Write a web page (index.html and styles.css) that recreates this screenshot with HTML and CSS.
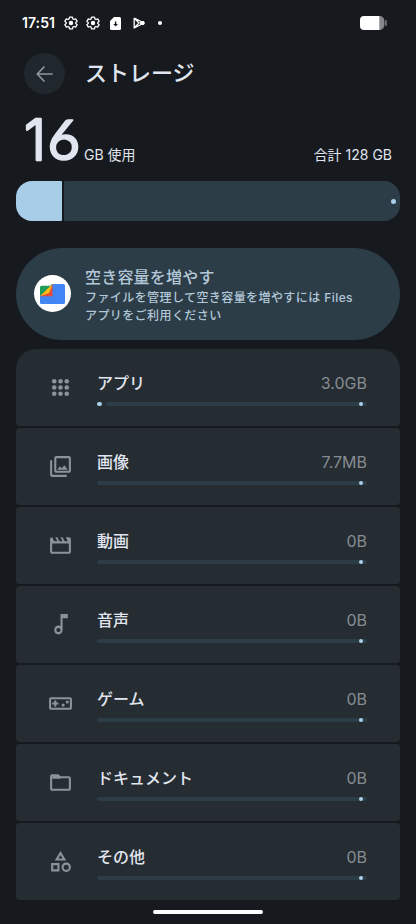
FILE: index.html
```
<!DOCTYPE html>
<html lang="ja">
<head>
<meta charset="utf-8">
<meta name="viewport" content="width=device-width">
<title>ストレージ</title>
<link rel="stylesheet" href="styles.css">
</head>
<body>
<svg class="defs" width="0" height="0">
  <symbol id="gear" viewBox="0 0 24 24"><path fill="none" stroke="currentColor" stroke-width="2.2" stroke-linejoin="round" d="M9.500 1.800h5l.7 3.200 1.800 1 3-1 2.600 4.200-2.400 2.100v1.400l2.400 2.100-2.600 4.200-3-1-1.800 1-.7 3.200h-5l-.7-3.200-1.800-1-3 1-2.600-4.200 2.400-2.100v-1.400L1.400 9.200 4 5l3 1 1.800-1z"/><circle cx="12" cy="12" r="3.800" fill="currentColor"/></symbol>
</svg>
<header class="status">
  <span class="clock">17:51</span>
  <svg class="s-gear" width="14" height="14"><use href="#gear"/></svg>
  <svg class="s-gear two" width="14" height="14"><use href="#gear"/></svg>
  <svg class="s-sd" width="11" height="13" viewBox="0 0 11 13"><path fill="#fff" d="M4 0h5.500A1.500 1.500 0 0 1 11 1.500v10A1.500 1.500 0 0 1 9.500 13h-8A1.500 1.500 0 0 1 0 11.500V4z"/><path fill="#171b1f" d="M4.900 4.500h1.400v2.600H8L5.600 9.600 3.200 7.100h1.700z"/></svg>
  <svg class="s-play" width="12" height="12" viewBox="0 0 12 12" fill="none" stroke="#fff"><path stroke-width="1.300" stroke-linejoin="round" d="M1.200 1v10L8 7.500M1.200 1 8 4.500M1.500 1.500 6 6l-4.500 4.500"/><path fill="#fff" stroke="none" d="M6.500 6 8.300 4.100h2.400L12 6l-1.300 1.900H8.300z"/></svg>
  <i class="s-dot"></i>
  <svg class="battery" width="27" height="14" viewBox="0 0 27 14"><path fill="#85878a" d="M18 0h2q4.500 0 4.500 7T20 14h-2z"/><path fill="#fff" d="M4 0h15.300v14H4a4 4 0 0 1-4-4V4a4 4 0 0 1 4-4z"/><rect x="25.200" y="4" width="1.600" height="6" rx=".8" fill="#777a7d"/></svg>
</header>
<div class="titlebar">
  <div class="back"><svg width="18" height="18" viewBox="0 0 18 18" fill="none" stroke="#8f969c" stroke-width="1.700" stroke-linecap="round" stroke-linejoin="round"><path d="M16 9H1.500M8 2 1.200 9 8 16"/></svg></div>
  <h1>ストレージ</h1>
</div>
<section class="usage">
  <svg class="big" width="60" height="48" viewBox="0 0 60 48"><text y="44"><tspan class="one" x="-2">1</tspan><tspan class="six" x="21.500">6</tspan></text></svg>
  <span class="unit">GB 使用</span>
  <span class="total">合計 128 GB</span>
</section>
<div class="meter"><div class="used"></div><div class="free"><i></i></div></div>
<section class="tip">
  <div class="logo"><svg width="25" height="20" viewBox="0 0 25 20"><path fill="#4285f4" d="M12 0h11.500Q25 0 25 1.500v17q0 1.500-1.500 1.500h-22Q0 20 0 18.500V10z"/><path fill="#1e9e58" d="M1.500 1.800H12L0 12V3.300q0-1.500 1.500-1.500z"/><path fill="#e64a36" d="M12.500 0v12.200H0z"/><path fill="#fbc116" d="M12.500 0 9.200 9 0 12.200z"/></svg></div>
  <div><h2>空き容量を増やす</h2><p>ファイルを管理して空き容量を増やすには <span>Files</span><br>アプリをご利用ください</p></div>
</section>
<main class="list">
  <div class="row"><svg viewBox="0 0 24 24"><g><circle cx="6" cy="6" r="2.200"/><circle cx="12" cy="6" r="2.200"/><circle cx="18" cy="6" r="2.200"/><circle cx="6" cy="12" r="2.200"/><circle cx="12" cy="12" r="2.200"/><circle cx="18" cy="12" r="2.200"/><circle cx="6" cy="18" r="2.200"/><circle cx="12" cy="18" r="2.200"/><circle cx="18" cy="18" r="2.200"/></g></svg><div class="info"><div class="line"><b>アプリ</b><span>3.0GB</span></div><div class="bar"><i class="fill"></i><i class="track"><i></i></i></div></div></div>
  <div class="row"><svg viewBox="0 0 24 24"><path d="M20 4v12H8V4h12m0-2H8c-1.100 0-2 .9-2 2v12c0 1.100.9 2 2 2h12c1.100 0 2-.9 2-2V4c0-1.100-.9-2-2-2zm-8.500 9.670 1.690 2.260 2.480-3.100L19 15H9zM2 6v14c0 1.100.9 2 2 2h14v-2H4V6H2z"/></svg><div class="info"><div class="line"><b>画像</b><span>7.7MB</span></div><div class="bar"><i class="track"><i></i></i></div></div></div>
  <div class="row"><svg viewBox="0 0 24 24"><path d="m4 4 2 4h3L7 4h2l2 4h3l-2-4h2l2 4h3l-2-4h3c1.100 0 2 .9 2 2v12c0 1.100-.9 2-2 2H4c-1.100 0-2-.9-2-2V6c0-1.100.9-2 2-2zm0 6v8h16v-8H4z"/></svg><div class="info"><div class="line"><b>動画</b><span>0B</span></div><div class="bar"><i class="track"><i></i></i></div></div></div>
  <div class="row"><svg viewBox="0 0 24 24"><path d="M12 2v11.550c-.59-.34-1.270-.55-2-.55-2.210 0-4 1.790-4 4.250S7.790 21.500 10 21.500s4-1.790 4-4.250V6h5V2h-7zm-2 17.300c-1.100 0-2-.9-2-2s.9-2 2-2 2 .9 2 2-.9 2-2 2z"/></svg><div class="info"><div class="line"><b>音声</b><span>0B</span></div><div class="bar"><i class="track"><i></i></i></div></div></div>
  <div class="row"><svg viewBox="0 0 24 24"><path d="M21 6H3c-1.100 0-2 .9-2 2v8c0 1.100.9 2 2 2h18c1.100 0 2-.9 2-2V8c0-1.100-.9-2-2-2zm0 10H3V8h18v8zM6 15h2v-2h2v-2H8V9H6v2H4v2h2z"/><circle cx="14.500" cy="13.500" r="1.500"/><circle cx="18.500" cy="10.500" r="1.500"/></svg><div class="info"><div class="line"><b>ゲーム</b><span>0B</span></div><div class="bar"><i class="track"><i></i></i></div></div></div>
  <div class="row"><svg viewBox="0 0 24 24"><path d="m9.170 6 2 2H20v10H4V6h5.170M10 4H4c-1.100 0-1.990.9-1.990 2L2 18c0 1.100.9 2 2 2h16c1.100 0 2-.9 2-2V8c0-1.100-.9-2-2-2h-8l-2-2z"/><path d="M4 5h6l2 2.500v1H4z"/></svg><div class="info"><div class="line"><b>ドキュメント</b><span>0B</span></div><div class="bar"><i class="track"><i></i></i></div></div></div>
  <div class="row"><svg viewBox="0 0 24 24"><path d="m12 2-5.500 9h11L12 2zm0 3.840L13.930 9h-3.870L12 5.840zM17.500 13c-2.490 0-4.500 2.010-4.500 4.500s2.010 4.500 4.500 4.500 4.500-2.010 4.500-4.500-2.010-4.500-4.500-4.500zm0 7a2.500 2.500 0 0 1 0-5 2.500 2.500 0 0 1 0 5zM3 21.500h8v-8H3v8zm2-6h4v4H5v-4z"/></svg><div class="info"><div class="line"><b>その他</b><span>0B</span></div><div class="bar"><i class="track"><i></i></i></div></div></div>
</main>
<div class="home"></div>
</body>
</html>
```
FILE: styles.css
```
* { box-sizing: border-box; margin: 0; padding: 0; }
body {
  width: 416px; height: 924px; overflow: hidden;
  display: flex; flex-direction: column; padding: 0 16px;
  background: #161a1e; color: #e0e5ef;
  font-family: Inter, "Noto Sans CJK JP", sans-serif;
}
svg { display: block; flex: none; }
.defs { position: absolute; }
.status { height: 45px; flex: none; display: flex; align-items: center; padding: 1px 13px 0 6px; color: #fff; }
.clock { width: 42px; font-size: 14px; font-weight: 600; letter-spacing: .05px; white-space: nowrap; margin-top: -2px; }
.s-gear.two { margin-left: 8px; }
.s-sd { margin-left: 10px; }
.s-play { margin-left: 12px; }
.s-dot { width: 4px; height: 4px; border-radius: 50%; background: #fff; margin-left: 13px; }
.battery { margin-left: auto; }
.titlebar { height: 57px; flex: none; display: flex; align-items: center; padding-left: 8px; }
.back { width: 41px; height: 41px; border-radius: 50%; background: #20282e; display: flex; align-items: center; justify-content: center; }
h1 { font-size: 22px; font-weight: 500; line-height: 32px; margin: -2px 0 0 20px; }
.usage { height: 79px; flex: none; display: flex; align-items: flex-end; padding: 0 8px 15px 10px; font-size: 14px; }
.usage span { line-height: 22px; white-space: nowrap; }
.big { fill: #e0e5ef; stroke: #e0e5ef; stroke-linejoin: round; overflow: visible; margin-bottom: 2px; }
.one { font: 300 56px Inter; stroke-width: 2.400px; }
.six { font: 400 56px Lato; stroke-width: 1.500px; }
.unit { margin-left: -2px; }
.total { margin-left: auto; }
.meter { height: 40px; flex: none; display: flex; gap: 2px; }
.used { width: 46px; background: #a8cde8; border-radius: 16px 1px 1px 16px; }
.free { flex: 1; background: #2c3d48; border-radius: 1px 16px 16px 1px; display: flex; align-items: center; justify-content: flex-end; padding-right: 4px; }
.free i { width: 5px; height: 5px; border-radius: 50%; background: #a9cfea; }
.tip { margin-top: 26.500px; height: 92px; flex: none; border-radius: 46px; background: #2c3d48; display: flex; align-items: center; padding: 3px 18px 0; color: #b2c7d7; }
.logo { width: 37px; height: 37px; flex: none; border-radius: 50%; background: #fff; display: flex; align-items: center; justify-content: center; margin-top: -3px; }
.tip > div + div { margin-left: 14px; }
h2 { font-size: 16px; line-height: 23px; font-weight: 500; letter-spacing: .2px; }
.tip p { font-size: 12px; line-height: 17.500px; letter-spacing: .42px; font-weight: 500; white-space: nowrap; }
.list { margin-top: 9.500px; display: flex; flex-direction: column; gap: 2px; flex: none; }
.row { height: 77px; background: #252c32; border-radius: 4px; display: flex; align-items: center; padding: 2px 33px 0 32px; }
.row:first-child { border-radius: 20px 20px 4px 4px; }
.row > svg { width: 25px; height: 25px; fill: #8c9399; margin-top: -2px; }
.info { flex: 1; margin-left: 24px; }
.line { display: flex; justify-content: space-between; align-items: center; height: 24px; }
.line b { font-size: 16px; font-weight: 500; margin-top: -2px; }
.line span { font-size: 16px; color: #858c93; }
.bar { display: flex; gap: 4px; margin-top: 7px; height: 4px; }
.fill { width: 5px; height: 4px; border-radius: 2px; background: #a9cfea; }
.track { flex: 1; border-radius: 2px; background: #2c3d48; display: flex; justify-content: flex-end; padding-right: 4px; }
.track i { width: 4px; height: 4px; border-radius: 50%; background: #a9cfea; }
.home { width: 110px; height: 4px; flex: none; align-self: center; border-radius: 2px; background: #fff; margin-top: 10px; }
```
